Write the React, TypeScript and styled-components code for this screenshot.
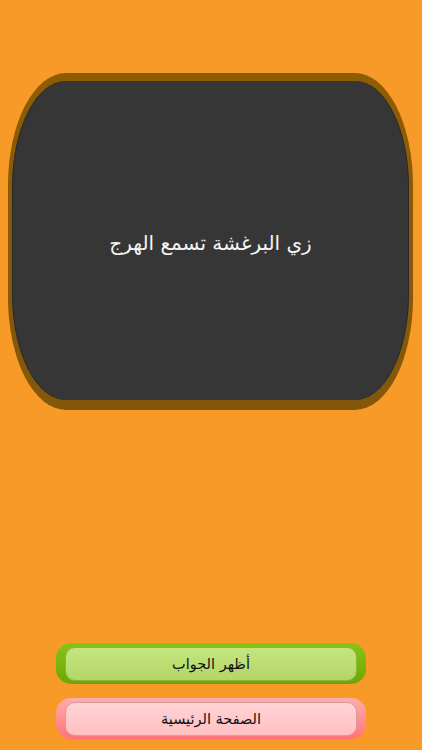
import React from "react";
import styled, { createGlobalStyle } from "styled-components";

const GlobalStyle = createGlobalStyle`
  html, body {
    margin: 0;
    padding: 0;
    background: #f89a28;
  }
  #root {
    height: 750px;
  }
`;

const Page = styled.div`
  height: 750px;
  display: flex;
  flex-direction: column;
  background: #f89a28;
  font-family: "DejaVu Sans", sans-serif;
  direction: rtl;
`;

const CardFrame = styled.div`
  margin: 73px 9px 0 8px;
  height: 337px;
  box-sizing: border-box;
  padding: 8px 4px 10px 4px;
  background: linear-gradient(#8e5c02, #83570a);
  border-radius: 58px / 112px;
  display: flex;
`;

const Card = styled.div`
  flex: 1;
  background: #363636;
  border-radius: 54px / 106px;
  display: flex;
  align-items: center;
  justify-content: center;
  box-shadow: inset 1px 0 0 rgba(0, 0, 0, 0.25), inset -1px 0 0 rgba(0, 0, 0, 0.25);
`;

const Question = styled.div`
  color: #f4f4f4;
  font-size: 20px;
  padding-top: 4px;
`;

const Spacer = styled.div`
  flex: 1;
`;

const Actions = styled.div`
  display: flex;
  flex-direction: column;
  align-items: center;
  gap: 14px;
  margin-bottom: 11px;
`;

const palettes = {
  green: {
    outer: "linear-gradient(#86c414, #6ea602)",
    inner: "linear-gradient(#c6e57f, #b2d666)",
    line: "#8fb443",
  },
  pink: {
    outer: "linear-gradient(#ffadad, #ff7474)",
    inner: "linear-gradient(#ffd3d5, #ffc0c3)",
    line: "#d99a9d",
  },
};

type Tone = keyof typeof palettes;

const ButtonShell = styled.button<{ $tone: Tone }>`
  width: 310px;
  height: 41px;
  box-sizing: border-box;
  padding: 4px 9px 3px 9px;
  border: none;
  border-radius: 15px;
  background: ${({ $tone }) => palettes[$tone].outer};
  display: flex;
  cursor: pointer;
`;

const ButtonFace = styled.span<{ $tone: Tone }>`
  flex: 1;
  display: flex;
  align-items: center;
  justify-content: center;
  border-radius: 10px;
  border: 1px solid ${({ $tone }) => palettes[$tone].line};
  background: ${({ $tone }) => palettes[$tone].inner};
  color: #111;
  font-family: "DejaVu Sans", sans-serif;
  font-size: 14.5px;
`;

const App = () => {
  return (
    <>
      <GlobalStyle />
      <Page>
        <CardFrame>
          <Card>
            <Question>زي البرغشة تسمع الهرج</Question>
          </Card>
        </CardFrame>
        <Spacer />
        <Actions>
          <ButtonShell $tone="green">
            <ButtonFace $tone="green">أظهر الجواب</ButtonFace>
          </ButtonShell>
          <ButtonShell $tone="pink">
            <ButtonFace $tone="pink">الصفحة الرئيسية</ButtonFace>
          </ButtonShell>
        </Actions>
      </Page>
    </>
  );
};

export default App;
